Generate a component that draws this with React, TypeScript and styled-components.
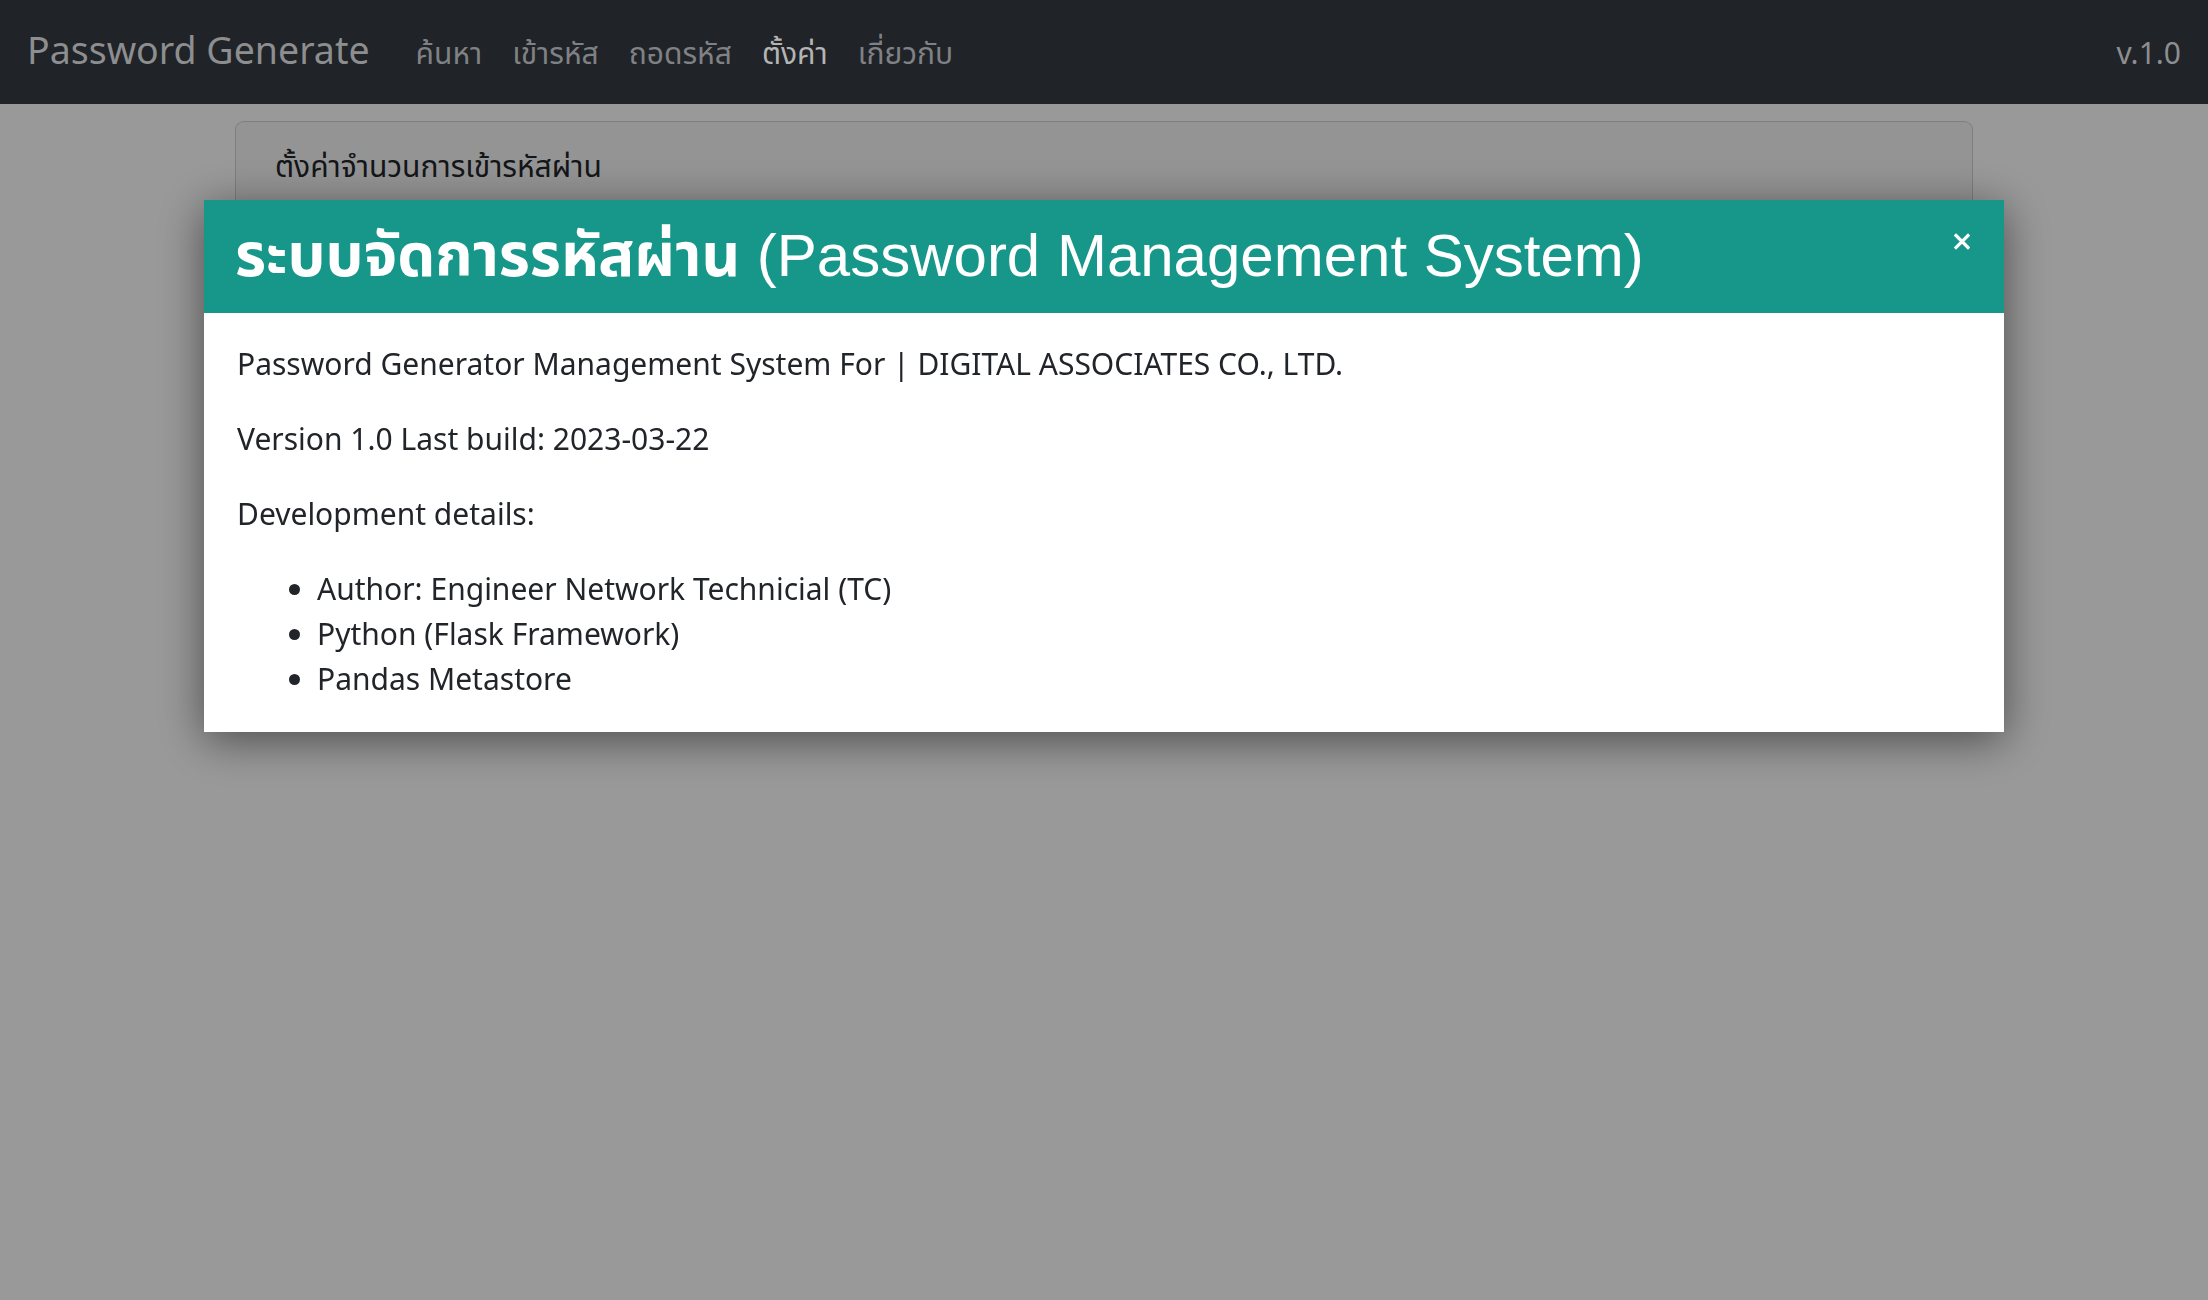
import React from 'react'
import styled, { createGlobalStyle } from 'styled-components'

const GlobalStyle = createGlobalStyle`
  html, body {
    margin: 0;
    padding: 0;
    background: #ffffff;
    font-family: 'Noto Sans', 'Noto Sans Thai', sans-serif;
    color: #212529;
  }
  * {
    box-sizing: border-box;
  }
`

const navItems = [
  { label: 'ค้นหา', active: false },
  { label: 'เข้ารหัส', active: false },
  { label: 'ถอดรหัส', active: false },
  { label: 'ตั้งค่า', active: true },
  { label: 'เกี่ยวกับ', active: false },
]

const details = [
  'Author: Engineer Network Technicial (TC)',
  'Python (Flask Framework)',
  'Pandas Metastore',
]

const App = () => {
  return (
    <>
      <GlobalStyle />
      <Navbar>
        <Brand>Password Generate</Brand>
        <NavList>
          {navItems.map((item, index) => {
            return (
              <NavLink key={index} $active={item.active}>
                {item.label}
              </NavLink>
            )
          })}
        </NavList>
        <Version>v.1.0</Version>
      </Navbar>

      {/* ページ本体（モーダルの背後） */}
      <Container>
        <Card>
          <CardHeader>ตั้งค่าจำนวนการเข้ารหัสผ่าน</CardHeader>
          <CardBody />
        </Card>
      </Container>

      <Backdrop />

      {/* About モーダル */}
      <ModalWrap>
        <Modal>
          <ModalHeader>
            <ModalTitle>
              <ThaiPart>ระบบจัดการรหัสผ่าน</ThaiPart> (Password Management System)
            </ModalTitle>
            <CloseButton aria-label="close">
              <svg width="16" height="17" viewBox="0 0 16 17">
                <path
                  d="M2 2.5 L14 14.5 M14 2.5 L2 14.5"
                  stroke="#ffffff"
                  strokeWidth="3.2"
                  strokeLinecap="square"
                />
              </svg>
            </CloseButton>
          </ModalHeader>
          <ModalBody>
            <Paragraph>
              Password Generator Management System For | DIGITAL ASSOCIATES CO., LTD.
            </Paragraph>
            <Paragraph>Version 1.0 Last build: 2023-03-22</Paragraph>
            <Paragraph>Development details:</Paragraph>
            <DetailList>
              {details.map((d, index) => {
                return <li key={index}>{d}</li>
              })}
            </DetailList>
          </ModalBody>
        </Modal>
      </ModalWrap>
    </>
  )
}

const Navbar = styled.nav`
  position: relative;
  z-index: 1070;
  display: flex;
  align-items: center;
  height: 104px;
  padding: 0 27px;
  background-color: #202327;
`

const Brand = styled.div`
  font-size: 37.5px;
  line-height: 54px;
  color: #8d8e90;
  margin-right: 31px;
  white-space: nowrap;
  position: relative;
  top: -2px;
`

const NavList = styled.div`
  display: flex;
  align-items: center;
  flex: 1;
`

const NavLink = styled.a<{ $active: boolean }>`
  font-size: 30px;
  line-height: 45px;
  padding: 0 15px;
  color: ${(p) => (p.$active ? '#b4b4b4' : '#7f8184')};
  white-space: nowrap;
  cursor: pointer;
`

const Version = styled.div`
  font-size: 30px;
  line-height: 45px;
  color: #8d8e90;
`

const Container = styled.main`
  width: 1738px;
  margin: 17px auto 0;
`

const Card = styled.section`
  border: 1.5px solid rgba(0, 0, 0, 0.175);
  border-radius: 9px;
  background: #ffffff;
  overflow: hidden;
`

const CardHeader = styled.div`
  padding: 21px 39px;
  font-size: 30px;
  line-height: 45px;
  background: rgba(0, 0, 0, 0.03);
  color: #212529;
`

const CardBody = styled.div`
  height: 380px;
`

const Backdrop = styled.div`
  position: fixed;
  inset: 0;
  z-index: 1050;
  background: rgba(0, 0, 0, 0.4);
`

const ModalWrap = styled.div`
  position: fixed;
  inset: 0;
  z-index: 1055;
  display: flex;
  flex-direction: column;
  align-items: center;
  padding-top: 200px;
`

const Modal = styled.div`
  width: 1800px;
  background: #ffffff;
  box-shadow: 0 8px 42px rgba(0, 0, 0, 0.5);
`

const ModalHeader = styled.header`
  display: flex;
  align-items: flex-start;
  height: 113px;
  padding: 20px 34px 0 31px;
  background-color: #17968a;
`

const ModalTitle = styled.h1`
  flex: 1;
  margin: 0;
  font-family: 'Liberation Sans', 'Noto Sans Thai', 'Noto Sans', Arial, sans-serif;
  font-size: 60px;
  font-weight: 400;
  line-height: 72px;
  color: #ffffff;
  white-space: nowrap;
`

const ThaiPart = styled.span`
  font-weight: 700;
`

const CloseButton = styled.button`
  display: flex;
  padding: 0;
  margin-top: 13px;
  border: none;
  background: none;
  cursor: pointer;
`

const ModalBody = styled.div`
  padding: 28px 33px 31px;
  font-size: 30px;
  line-height: 45px;
  color: #212529;
`

const Paragraph = styled.p`
  margin: 0 0 30px;
`

const DetailList = styled.ul`
  margin: 0;
  padding-left: 80px;
  list-style: disc;
`

export default App
